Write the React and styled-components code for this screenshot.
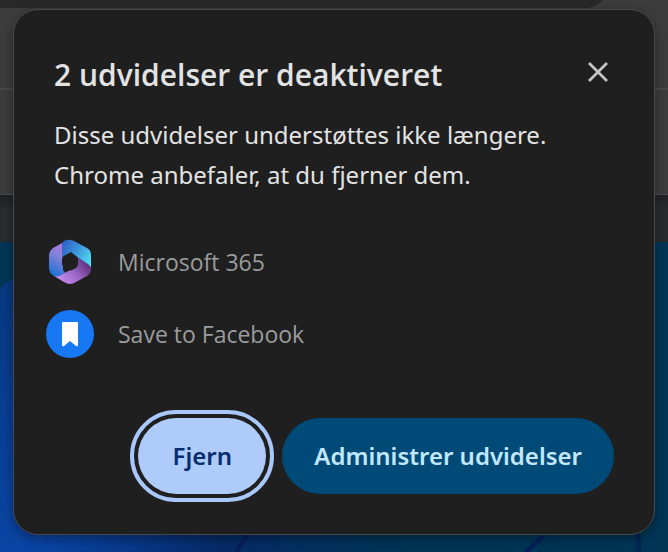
import React from "react";
import styled, { createGlobalStyle } from "styled-components";

const GlobalStyle = createGlobalStyle`
  * { box-sizing: border-box; }
  body {
    margin: 0;
    background: #003556;
    font-family: "Segoe UI", "Noto Sans", sans-serif;
  }
`;

const Page = styled.main`
  display: grid;
  min-height: 100vh;
  grid-template: minmax(0, 1fr) / minmax(0, 1fr);
`;

const Browser = styled.div`
  grid-area: 1 / 1;
  display: flex;
  flex-direction: column;
  min-width: 0;
`;

const AddressStrip = styled.div`
  height: 90px;
  padding-right: 59px;
  background: #3c3c3c;
  border-bottom: 2px solid #484848;
  overflow: hidden;
`;

const AddressBar = styled.div`
  height: 48px;
  margin-top: -40px;
  background: #282828;
  border-bottom-right-radius: 24px;
`;

const Bookmarks = styled.div`
  height: 105px;
  background: #3c3c3c;
  border-bottom: 1px solid #4a4b4a;
`;

const PageHeader = styled.div`
  height: 47px;
  background: linear-gradient(#202122, #2a2b2c 14px);
`;

const Wallpaper = styled.svg`
  display: block;
  flex: 1;
  width: 100%;
  height: 0;
  min-height: 310px;
`;

const Dialog = styled.section`
  grid-area: 1 / 1;
  z-index: 1;
  align-self: start;
  margin: 9px 13px 17px;
  padding: 45px 40px 40px;
  border: 1px solid #484a49;
  border-radius: 25px;
  background: #1f1f1f;
  color: #e3e3e3;
  box-shadow: 0 4px 12px rgba(0, 0, 0, 0.35);
`;

const Header = styled.header`
  display: flex;
  justify-content: space-between;
  align-items: flex-start;
`;

const Title = styled.h1`
  margin: 0;
  font-family: "Segoe UI", "Open Sans", sans-serif;
  font-size: 30px;
  line-height: 40px;
  font-weight: 600;
`;

const CloseButton = styled.button`
  display: flex;
  padding: 7px 6px;
  border: 0;
  background: none;
  color: #c7c7c7;
  cursor: pointer;
`;

const Message = styled.p`
  margin: 20px 0 43px;
  font-size: 24px;
  line-height: 40px;
`;

const ExtensionList = styled.ul`
  display: flex;
  flex-direction: column;
  gap: 24px;
  margin: 0 0 60px -8px;
  padding: 0;
  list-style: none;
`;

const Extension = styled.li`
  display: flex;
  align-items: center;
  gap: 24px;
  font-family: "Segoe UI", "Open Sans", sans-serif;
  font-size: 23px;
  line-height: 48px;
  color: #9a9c9e;
`;

const Icon = styled.svg`
  display: block;
  flex: none;
`;

const Actions = styled.footer`
  display: flex;
  justify-content: flex-end;
  gap: 16px;
`;

const Button = styled.button`
  min-width: 128px;
  height: 76px;
  padding: 0 32px;
  border: 0;
  border-radius: 38px;
  background: ${(p) => (p.$primary ? "#aecbfa" : "#004a77")};
  color: ${(p) => (p.$primary ? "#062e6f" : "#c2e7ff")};
  font: 600 24px/40px "Segoe UI", "Noto Sans", sans-serif;
  white-space: nowrap;
  cursor: pointer;
  outline: ${(p) => (p.$primary ? "4px solid #a8c7fa" : "none")};
  outline-offset: 4px;
`;

function MicrosoftIcon() {
  return (
    <Icon width="48" height="48" viewBox="0 0 48 48" aria-hidden="true">
      <defs>
        <linearGradient id="m365-left" x1="0.7" y1="0" x2="0.4" y2="1">
          <stop offset="0" stopColor="#b47be0" />
          <stop offset="0.45" stopColor="#8181d8" />
          <stop offset="1" stopColor="#1672d4" />
        </linearGradient>
        <linearGradient id="m365-right" x1="0" y1="0.2" x2="1" y2="0.7">
          <stop offset="0" stopColor="#2f62c4" />
          <stop offset="0.5" stopColor="#3d96dc" />
          <stop offset="1" stopColor="#4fdbf0" />
        </linearGradient>
        <linearGradient id="m365-bottom" x1="0" y1="0.8" x2="1" y2="0.2">
          <stop offset="0" stopColor="#cb92f3" />
          <stop offset="0.5" stopColor="#9b68c8" />
          <stop offset="1" stopColor="#55256f" />
        </linearGradient>
      </defs>
      <path d="M19 3.5 17 8V32L20 36Q14 41 8 38 3 35 3 30V18Q3 13 7 10Z" fill="url(#m365-left)" />
      <path d="M16 5Q20 0 27 2.5L41 10Q45 12 45 17V30L43 28 31 19 25 14 16 19Z" fill="url(#m365-right)" />
      <path d="M31 19 42 26Q45 28 45 31 45 35 41 38L30 44Q24 48 18 44L8 38Q13 39 17 36L24 32 31 27Z" fill="url(#m365-bottom)" />
      <path d="M22 16Q24 15 26 16L30 18Q32 19 32 22V26Q32 28 30 30L26 32Q24 33 22 32L18 29Q16 28 16 25V21Q16 19 18 18Z" fill="#1f1f1f" />
    </Icon>
  );
}

function BookmarkIcon() {
  return (
    <Icon width="48" height="48" viewBox="0 0 48 48" aria-hidden="true">
      <circle cx="24" cy="24" r="24" fill="#1877f2" />
      <path d="M17 12H31Q32 12 32 13V35Q32 37 30 36L24 31 18 36Q16 37 16 35V13Q16 12 17 12Z" fill="#fff" />
    </Icon>
  );
}

const extensions = [
  { name: "Microsoft 365", Logo: MicrosoftIcon },
  { name: "Save to Facebook", Logo: BookmarkIcon },
];

export default function App() {
  return (
    <>
      <GlobalStyle />
      <Page>
        <Browser aria-hidden="true">
          <AddressStrip>
            <AddressBar />
          </AddressStrip>
          <Bookmarks />
          <PageHeader />
          <Wallpaper viewBox="0 0 668 310" preserveAspectRatio="none">
            <defs>
              <linearGradient id="wave" x1="0" y1="0" x2="0" y2="1">
                <stop offset="0" stopColor="#083881" />
                <stop offset="1" stopColor="#0a45a5" />
              </linearGradient>
              <linearGradient id="wave-fade" x1="0" y1="0" x2="1" y2="0">
                <stop offset="0" stopColor="#062b73" stopOpacity="0" />
                <stop offset="0.5" stopColor="#062b68" />
                <stop offset="1" stopColor="#003556" />
              </linearGradient>
            </defs>
            <path d="M0 0H668V310H0Z" fill="#003556" />
            <path d="M0 46Q8 40 16 34L340 180V310H0Z" fill="url(#wave)" />
            <path d="M40 230H400V310H40Z" fill="url(#wave-fade)" />
            <path d="M252 286 236 310M550 288 526 310" stroke="#071f59" strokeWidth="4" fill="none" />
            <path d="M634 280Q640 295 638 310" stroke="#062454" strokeWidth="5" fill="none" />
          </Wallpaper>
        </Browser>
        <Dialog role="dialog" aria-labelledby="dialog-title">
          <Header>
            <Title id="dialog-title">2 udvidelser er deaktiveret</Title>
            <CloseButton type="button" aria-label="Luk">
              <Icon width="20" height="20" viewBox="0 0 20 20" aria-hidden="true">
                <path d="M1 1 19 19M19 1 1 19" stroke="currentColor" strokeWidth="2.7" />
              </Icon>
            </CloseButton>
          </Header>
          <Message>
            Disse udvidelser understøttes ikke længere.
            <br />
            Chrome anbefaler, at du fjerner dem.
          </Message>
          <ExtensionList>
            {extensions.map(({ name, Logo }) => (
              <Extension key={name}>
                <Logo />
                {name}
              </Extension>
            ))}
          </ExtensionList>
          <Actions>
            <Button type="button" $primary>
              Fjern
            </Button>
            <Button type="button">Administrer udvidelser</Button>
          </Actions>
        </Dialog>
      </Page>
    </>
  );
}
